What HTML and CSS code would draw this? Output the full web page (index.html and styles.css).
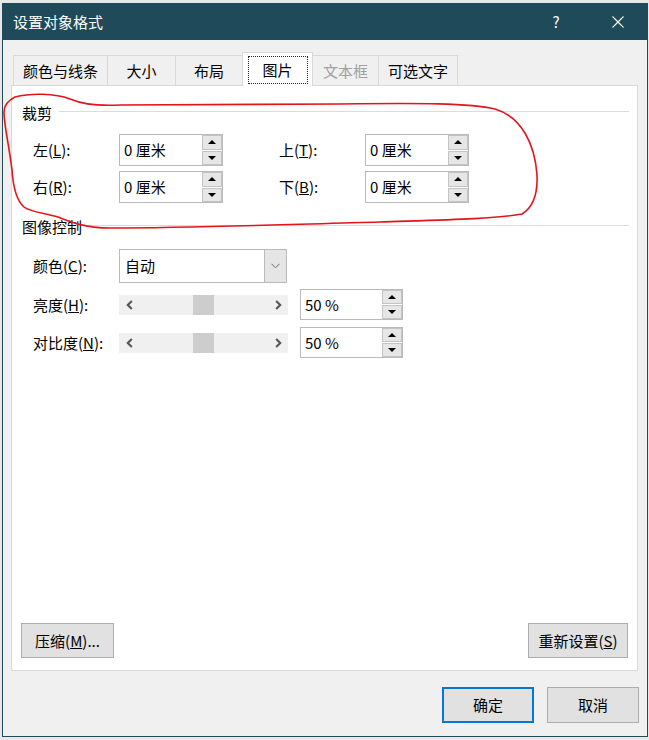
FILE: index.html
```html
<!DOCTYPE html>
<html lang="zh-CN">
<head>
<meta charset="utf-8">
<title>设置对象格式</title>
<link rel="stylesheet" href="styles.css">
</head>
<body>
<div class="window">
  <div class="titlebar">
    <span class="title">设置对象格式</span>
    <span class="help">?</span>
    <span class="close"><svg width="12" height="12" viewBox="0 0 12 12"><path d="M0.5 0.5 L11.5 11.5 M11.5 0.5 L0.5 11.5" stroke="#fff" stroke-width="1.1" fill="none"/></svg></span>
  </div>
  <div class="client">
    <div class="tabs">
      <div class="tab t1">颜色与线条</div>
      <div class="tab t2">大小</div>
      <div class="tab t3">布局</div>
      <div class="tab active"><span class="focus">图片</span></div>
      <div class="tab t5 disabled">文本框</div>
      <div class="tab t6">可选文字</div>
    </div>
    <div class="panel">
      <div class="group-head"><span>裁剪</span><i class="rule"></i></div>
      <div class="crop">
        <div class="row crop-row">
          <div class="field"><span class="label">左(<u>L</u>):</span>
            <div class="spin"><span class="val">0 厘米</span><span class="btns"><span class="sb"><i class="up"></i></span><span class="sb"><i class="down"></i></span></span></div>
          </div>
          <div class="field second"><span class="label">上(<u>T</u>):</span>
            <div class="spin"><span class="val">0 厘米</span><span class="btns"><span class="sb"><i class="up"></i></span><span class="sb"><i class="down"></i></span></span></div>
          </div>
        </div>
        <div class="row crop-row r2">
          <div class="field"><span class="label">右(<u>R</u>):</span>
            <div class="spin"><span class="val">0 厘米</span><span class="btns"><span class="sb"><i class="up"></i></span><span class="sb"><i class="down"></i></span></span></div>
          </div>
          <div class="field second"><span class="label">下(<u>B</u>):</span>
            <div class="spin"><span class="val">0 厘米</span><span class="btns"><span class="sb"><i class="up"></i></span><span class="sb"><i class="down"></i></span></span></div>
          </div>
        </div>
      </div>
      <div class="group-head g2"><span>图像控制</span><i class="rule"></i></div>
      <div class="image">
        <div class="row color-row">
          <span class="label">颜色(<u>C</u>):</span>
          <div class="combo"><span class="val">自动</span><span class="drop"><svg width="9" height="6" viewBox="0 0 9 6"><path d="M0.5 0.8 L4.5 4.8 L8.5 0.8" stroke="#6a6a6a" stroke-width="1" fill="none"/></svg></span></div>
        </div>
        <div class="row slide-row">
          <span class="label">亮度(<u>H</u>):</span>
          <div class="scroll">
            <span class="arr"><svg width="7" height="10" viewBox="0 0 7 10"><path d="M5.8 1 L1.8 5 L5.8 9" stroke="#555" stroke-width="2.1" fill="none"/></svg></span>
            <span class="track"><span class="thumb"></span></span>
            <span class="arr"><svg width="7" height="10" viewBox="0 0 7 10"><path d="M1.2 1 L5.2 5 L1.2 9" stroke="#555" stroke-width="2.1" fill="none"/></svg></span>
          </div>
          <div class="spin pct"><span class="val">50 %</span><span class="btns"><span class="sb"><i class="up"></i></span><span class="sb"><i class="down"></i></span></span></div>
        </div>
        <div class="row slide-row r3">
          <span class="label">对比度(<u>N</u>):</span>
          <div class="scroll">
            <span class="arr"><svg width="7" height="10" viewBox="0 0 7 10"><path d="M5.8 1 L1.8 5 L5.8 9" stroke="#555" stroke-width="2.1" fill="none"/></svg></span>
            <span class="track"><span class="thumb"></span></span>
            <span class="arr"><svg width="7" height="10" viewBox="0 0 7 10"><path d="M1.2 1 L5.2 5 L1.2 9" stroke="#555" stroke-width="2.1" fill="none"/></svg></span>
          </div>
          <div class="spin pct"><span class="val">50 %</span><span class="btns"><span class="sb"><i class="up"></i></span><span class="sb"><i class="down"></i></span></span></div>
        </div>
      </div>
      <div class="panel-buttons">
        <button class="btn compress">压缩(<u>M</u>)...</button>
        <button class="btn reset">重新设置(<u>S</u>)</button>
      </div>
    </div>
    <div class="dialog-buttons">
      <button class="btn ok">确定</button>
      <button class="btn cancel">取消</button>
    </div>
  </div>
</div>
<svg class="annotation" width="649" height="740" viewBox="0 0 649 740">
  <path d="M15 97 C30 93 55 93 70 99 C80 103 90 106 120 105 C200 104 280 104 340 104 C420 103 470 103 495 109 C522 117 535 145 537 175 C538 197 532 208 522 214 C495 219 440 220 380 222 C300 224 200 228 110 228 C85 228 70 222 58 217 C45 213 30 212 24 207 C16 200 13 185 12 170 C9 145 4 125 4 112 C4 105 9 100 15 97" stroke="#e5131b" stroke-width="1.6" fill="none" stroke-linecap="round"/>
</svg>
</body>
</html>
```

FILE: styles.css
```css
html, body {
  margin: 0;
}
body {
  position: relative;
  width: 649px;
  height: 740px;
  overflow: hidden;
  background: #e8e8e8;
  padding: 3px 0 0 2px;
  box-sizing: border-box;
  font-family: "Noto Sans CJK SC", "Noto Sans", sans-serif;
  font-size: 15px;
  line-height: 20px;
  color: #000;
}
.window {
  width: 646px;
  height: 734px;
  box-sizing: border-box;
  border: 1px solid #1e4a5a;
  background: #f0f0f0;
  display: flex;
  flex-direction: column;
}
.titlebar {
  height: 36px;
  flex: none;
  background: #1e4a5a;
  color: #fff;
  display: flex;
  align-items: center;
  padding-left: 10px;
}
.title {
  flex: 1;
}
.help {
  width: 20px;
  text-align: center;
  margin-right: 46px;
  font-size: 15px;
}
.close {
  width: 12px;
  height: 12px;
  display: flex;
  margin-right: 23px;
}
.client {
  flex: 1;
  display: flex;
  flex-direction: column;
}
.tabs {
  display: flex;
  align-items: flex-end;
  padding: 12px 0 0 10px;
  position: relative;
  z-index: 1;
}
.tab {
  height: 30px;
  box-sizing: border-box;
  border: 1px solid #d9d9d9;
  border-bottom: none;
  background: #f0f0f0;
  display: flex;
  align-items: center;
  justify-content: center;
  margin-bottom: 1px;
  margin-left: -1px;
  padding-top: 1px;
}
.t1 { width: 95px; margin-left: 0; }
.t2 { width: 69px; }
.t3 { width: 68px; }
.t5 { width: 67px; }
.t6 { width: 80px; }
.tab.disabled {
  color: #a0a0a0;
}
.tab.active {
  width: 71px;
  height: 34px;
  background: #fff;
  margin-bottom: 0;
  padding-top: 0;
  position: relative;
  z-index: 2;
}
.focus {
  width: 60px;
  height: 28px;
  box-sizing: border-box;
  border: 1px dotted #222;
  display: flex;
  align-items: center;
  justify-content: center;
}
.panel {
  margin: -1px 0 0 8px;
  width: 627px;
  height: 586px;
  box-sizing: border-box;
  border: 1px solid #d9d9d9;
  background: #fff;
  display: flex;
  flex-direction: column;
  padding: 17px 8px 12px 10px;
}
.group-head {
  display: flex;
  align-items: center;
  height: 20px;
}
.rule {
  flex: 1;
  height: 1px;
  background: #dcdcdc;
  margin-left: 7px;
  margin-bottom: 3px;
}
.g2 {
  margin-top: 14px;
}
.crop {
  margin-top: 11px;
  padding-left: 11px;
}
.row {
  display: flex;
  align-items: center;
}
.crop-row {
  height: 32px;
}
.crop-row.r2 {
  margin-top: 5px;
}
.field {
  display: flex;
  align-items: center;
}
.field.second {
  margin-left: 56px;
}
.label {
  width: 86px;
  flex: none;
  white-space: nowrap;
}
.spin {
  width: 104px;
  height: 32px;
  box-sizing: border-box;
  border: 1px solid #bababa;
  background: #fff;
  display: flex;
}
.spin .val {
  flex: 1;
  padding-left: 4px;
  display: flex;
  align-items: center;
  white-space: pre;
}
.btns {
  width: 20px;
  display: flex;
  flex-direction: column;
  gap: 1px;
}
.sb {
  flex: 1;
  background: #e6e6e6;
  border: 1px solid #c4c4c4;
  display: flex;
  align-items: center;
  justify-content: center;
}
.up, .down {
  width: 0;
  height: 0;
  border-left: 4px solid transparent;
  border-right: 4px solid transparent;
}
.up {
  border-bottom: 4px solid #000;
}
.down {
  border-top: 4px solid #000;
}
.image {
  padding-left: 11px;
}
.color-row {
  margin-top: 12px;
  height: 34px;
}
.combo {
  width: 168px;
  height: 34px;
  box-sizing: border-box;
  border: 1px solid #bababa;
  display: flex;
  background: #fff;
}
.combo .val {
  flex: 1;
  padding-left: 5px;
  display: flex;
  align-items: center;
}
.drop {
  width: 21px;
  background: #e5e5e5;
  border-left: 1px solid #bababa;
  display: flex;
  align-items: center;
  justify-content: center;
}
.slide-row {
  margin-top: 6px;
  height: 31px;
}
.slide-row.r3 {
  margin-top: 7px;
}
.scroll {
  width: 169px;
  height: 20px;
  background: #f0f0f0;
  display: flex;
}
.arr {
  width: 20px;
  display: flex;
  align-items: center;
  justify-content: center;
}
.track {
  flex: 1;
  display: flex;
  justify-content: center;
}
.thumb {
  width: 21px;
  background: #cdcdcd;
}
.spin.pct {
  width: 103px;
  height: 31px;
  margin-left: 12px;
}
.panel-buttons {
  margin-top: auto;
  display: flex;
  justify-content: space-between;
  margin-left: -1px;
  margin-right: 1px;
}
.btn {
  font-family: inherit;
  font-size: 15px;
  line-height: 20px;
  color: #000;
  background: #e1e1e1;
  border: 1px solid #adadad;
  height: 35px;
  padding: 0;
  margin: 0;
}
.compress {
  width: 93px;
}
.reset {
  width: 100px;
}
.dialog-buttons {
  margin-top: 16px;
  display: flex;
  justify-content: flex-end;
  gap: 13px;
  padding-right: 8px;
}
.dialog-buttons .btn {
  width: 92px;
  height: 36px;
}
.btn.ok {
  border: 2px solid #0078d7;
}
.annotation {
  position: absolute;
  left: 0;
  top: 0;
  pointer-events: none;
}
```
